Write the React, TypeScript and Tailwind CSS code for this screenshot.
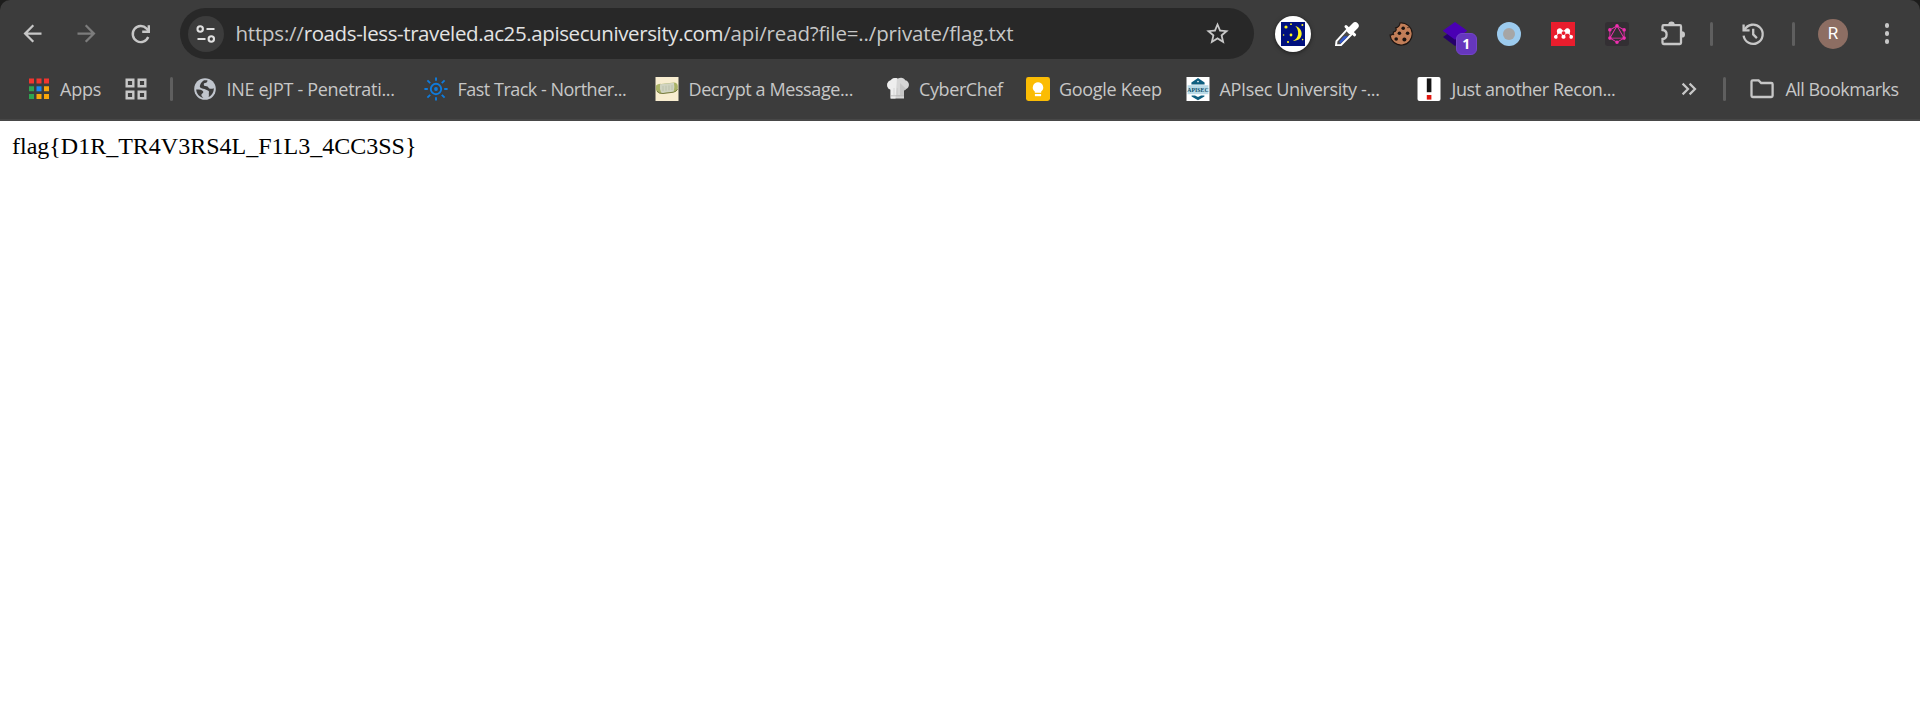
import type { ReactNode } from 'react';
import { SiGraphql, SiMendeley } from 'react-icons/si';

function Slot({ children }: { children: ReactNode }) {
  return <div className="relative flex h-12 w-[54px] shrink-0 items-center justify-center">{children}</div>;
}

function Divider({ className }: { className: string }) {
  return <div className={`h-6 w-[3px] shrink-0 rounded-full bg-[#5f5f5f] ${className}`} />;
}

function BackArrow({ className }: { className: string }) {
  return (
    <svg viewBox="0 0 24 24" className={`size-[27px] ${className}`} fill="currentColor">
      <path d="M20 11H7.83l5.59-5.59L12 4l-8 8 8 8 1.41-1.41L7.83 13H20v-2z" />
    </svg>
  );
}

function ReloadIcon() {
  return (
    <svg viewBox="0 0 28 28" className="size-7" fill="none" stroke="currentColor" strokeWidth="2.4">
      <path d="M21.2 17A8 8 0 1 1 19.6 8.6L21.5 11" />
      <path d="M21.8 5.2V11.8H15.2" />
    </svg>
  );
}

function TuneIcon() {
  return (
    <svg viewBox="0 0 20 20" className="size-5" fill="none" stroke="#e0e0e0" strokeWidth="2.1">
      <circle cx="4.2" cy="5" r="2.7" />
      <path d="M10.5 5H18.5M1.5 15H9.5" />
      <circle cx="15.3" cy="15" r="2.7" />
    </svg>
  );
}

function StarIcon() {
  return (
    <svg viewBox="0 0 24 24" className="size-[27px]" fill="currentColor">
      <path d="M22 9.24l-7.19-.62L12 2 9.19 8.63 2 9.24l5.46 4.73L5.82 21 12 17.27 18.18 21l-1.63-7.03L22 9.24zM12 15.4l-3.76 2.27 1-4.28-3.32-2.88 4.38-.38L12 6.1l1.71 4.04 4.38.38-3.32 2.88 1 4.28L12 15.4z" />
    </svg>
  );
}

function MoonIcon() {
  return (
    <div className="flex size-9 items-center justify-center rounded-full bg-white shadow-[0_1px_4px_rgba(0,0,0,0.5)]">
      <svg viewBox="0 0 24 24" className="size-6">
        <rect width="24" height="24" fill="#00107e" />
        <g fill="#fdf51c">
          <path d="M14.3 4C23 6.2 23.5 19 11.8 18.9C18.3 16.8 18.6 8 14.3 4z" />
          <circle cx="5" cy="5" r="1.6" />
          <circle cx="10" cy="13" r="1.4" />
          <circle cx="2.6" cy="13" r="0.8" />
          <circle cx="7" cy="20" r="1.1" />
          <circle cx="10" cy="2.2" r="0.9" />
          <circle cx="21.4" cy="3" r="1" />
          <circle cx="21.6" cy="17.6" r="0.8" />
        </g>
      </svg>
    </div>
  );
}

function DropperIcon() {
  return (
    <svg viewBox="0 0 24 24" className="size-6" fill="none">
      <path d="M1.5 19.2L12 7.6L16.8 12L6 23L1 23.6z" fill="#4a4a4a" stroke="#fff" strokeWidth="2" strokeLinejoin="round" />
      <path d="M4.2 19.8L9 14.2H13.2L5.6 21.6z" fill="#3155c9" />
      <path d="M11 4.6L19.6 12.8" stroke="#fff" strokeWidth="3" strokeLinecap="round" />
      <path d="M15.5 8.5L20.2 3.8" stroke="#fff" strokeWidth="7" strokeLinecap="round" />
    </svg>
  );
}

function CookieIcon() {
  return (
    <svg viewBox="0 0 24 24" className="size-6">
      <path
        d="M12.6 0.9A11.1 11.1 0 1 1 1 11.5C3 12 4.8 10.8 4.8 9C7.4 9 8.4 7 7.6 5.2C10 5 12 3.4 12.6 0.9z"
        transform="rotate(-8 12 12)"
        fill="#c27e58"
        stroke="#1c1411"
        strokeWidth="1.1"
      />
      <g fill="#1c1411">
        <circle cx="14.2" cy="6.2" r="1.8" />
        <circle cx="18.6" cy="11.2" r="1.8" />
        <circle cx="10.4" cy="11.2" r="1.8" />
        <circle cx="7.2" cy="17" r="1.8" />
        <circle cx="15.4" cy="17.4" r="2" />
        <circle cx="4.6" cy="12.6" r="0.7" />
        <circle cx="19" cy="5.6" r="0.7" />
      </g>
    </svg>
  );
}

function LayersIcon() {
  return (
    <>
      <svg viewBox="0 0 24 24" className="size-6">
        <path d="M12 6.5L24 15L12 24L0 15z" fill="#26006b" />
        <path d="M12 0L24.3 8.8L12 17.8L-0.3 8.8z" fill="#4a00b4" />
      </svg>
      <span className="absolute top-[23.5px] left-[27.5px] flex h-[22px] w-[21.5px] items-center justify-center rounded-[6px] border border-[#7444c8] bg-[#6637bd] font-['Open_Sans',sans-serif] text-[14px] leading-none font-bold text-white">
        1
      </span>
    </>
  );
}

function PuzzleIcon() {
  return (
    <svg viewBox="0 0 28 28" className="size-7" fill="none" stroke="currentColor" strokeWidth="2.3">
      <path d="M5.5 10V6.4Q5.5 5.2 6.7 5.2H22.8Q24 5.2 24 6.4V22.8Q24 24 22.8 24H6.7Q5.5 24 5.5 22.8V19C8.6 18.6 9.6 16.6 9.6 14.4C9.6 12.2 8.6 10.4 5.5 10z" />
      <path d="M11.3 4.6a3.2 3.2 0 0 1 6.4 0zM24.8 11.2a3.2 3.2 0 0 1 0 6.4z" fill="currentColor" stroke="none" />
    </svg>
  );
}

function HistoryIcon() {
  return (
    <svg viewBox="0 0 28 28" className="size-7" fill="none" stroke="currentColor" strokeWidth="2.3">
      <path d="M4.6 15.6A9.6 9.6 0 1 0 5.6 9.8" />
      <path d="M4.6 4.6V10.4H10.6" />
      <path d="M14.2 8.8V14.4L17.9 18.1" />
    </svg>
  );
}

function AppsIcon() {
  return (
    <svg viewBox="0 0 24 24" className="size-6">
      <path d="M2 1.6h5v5H2zM9.5 1.6h5v5h-5zM17 1.6h5v5h-5z" fill="#f2352f" />
      <path d="M2 9.3h5v5H2zM2 17h5v5H2z" fill="#2fa452" />
      <path d="M9.5 9.3h5v5h-5z" fill="#1c86f2" />
      <path d="M17 9.3h5v5h-5zM9.5 17h5v5h-5zM17 17h5v5h-5z" fill="#f9a60a" />
    </svg>
  );
}

function SquaresIcon() {
  return (
    <svg viewBox="0 0 24 24" className="size-6" fill="none" stroke="currentColor" strokeWidth="2.4">
      <path d="M2.7 2.7h6.6v6.6H2.7zM14.7 2.7h6.6v6.6h-6.6zM2.7 14.7h6.6v6.6H2.7zM14.7 14.7h6.6v6.6h-6.6z" />
    </svg>
  );
}

function GlobeIcon() {
  return (
    <svg viewBox="0 0 24 24" className="size-6">
      <circle cx="12" cy="12" r="10.8" fill="#c0c5cd" />
      <g fill="#3c3c3c">
        <path d="M14.4 3.2C14.6 5 13.6 5.8 12 6C10.6 6.2 10.6 7.2 11 8.2C11.4 9.6 14.8 8.6 15.4 10.4C15.8 12 18.6 12 20.8 11.2C21 15.4 18.4 18.8 15.6 20C16.4 17.8 15.4 16.6 16 15C16.2 13.6 13.8 13.6 12.6 12.6C11.6 11.4 8.6 11.8 7.2 10.4C6 9 8.4 4.6 11 3.2z" />
        <path d="M3.2 12.4C6.4 12.4 9.4 12.6 10.2 14.4C10.8 16 8.4 16.4 8.4 18C8.4 19 9.2 20 10.4 20.7C6.4 20 3.4 16.6 3.2 12.4z" />
      </g>
    </svg>
  );
}

function SunIcon() {
  return (
    <svg viewBox="0 0 24 24" className="size-6" fill="none" stroke="#0f7bdc" strokeWidth="1.9">
      <circle cx="12" cy="12" r="5.2" />
      <circle cx="12" cy="12" r="1.9" fill="#0f7bdc" stroke="none" />
      <path d="M12 0.4V3.8M12 20.2V23.6M0.4 12H3.8M20.2 12H23.6M3.4 3.4L6.2 6.2M17.8 17.8L20.6 20.6M3.4 20.6L6.2 17.8M17.8 6.2L20.6 3.4" />
    </svg>
  );
}

function CryptexIcon() {
  return (
    <svg viewBox="0 0 24 24" className="size-6">
      <rect x="0.5" width="23" height="24" fill="#f8edd0" />
      <path d="M1 8.6Q3 6.6 6 6.9L19 5.6Q22.4 6 22.8 9V11.6Q22 14.4 18.5 15.2L6.5 16.6Q2 16 1 13z" fill="#aab266" />
      <path d="M5 7.2L19 5.8Q20 10 18.6 14.8L6.4 16.2Q4.2 11.6 5 7.2z" fill="#d0d3c0" />
      <path d="M2 14.2Q4 16.8 8 16.5L18.5 15.2Q21.6 14.4 22.6 12.2" fill="none" stroke="#777b40" strokeWidth="1" />
      <path d="M8 9V14M11 8.8V13.8M14 8.4V13.4M17 8.2V13" stroke="#b6baa2" strokeWidth="0.7" />
    </svg>
  );
}

function ChefHatIcon() {
  return (
    <svg viewBox="0 0 24 24" className="size-6">
      <path d="M4.6 21.5V12.6C0.4 12 -0.2 4.6 4.6 3.6C6.2 0.6 10 0.4 12 1.6C14.6 0 18.4 0.8 19.2 3.2C23.8 4 24.2 10.6 20.2 12L18 13.6V21.5z" fill="#d6d6d6" />
      <path d="M4.6 21.5V12.6C0.4 12 -0.2 4.6 4.6 3.6C6.2 0.8 9 0.6 11 1.2L9.5 21.5z" fill="#eeeeee" />
      <path d="M14 6L20.2 12L18 13.6V18H14z" fill="#c6c6c6" />
      <path d="M4.6 18.8H18" stroke="#a6a6a6" strokeWidth="0.7" />
      <path d="M8 11V18M11.3 11V18M14.6 11V18" stroke="#c6c6c6" strokeWidth="0.6" />
    </svg>
  );
}

function KeepIcon() {
  return (
    <svg viewBox="0 0 24 24" className="size-6">
      <rect width="24" height="24" rx="2.4" fill="#fbbc04" />
      <path d="M12 5.2a5.2 5.2 0 0 0-3.2 9.3V15.8h6.4V14.5A5.2 5.2 0 0 0 12 5.2z" fill="#fff" />
      <path d="M8.9 17h6.2v2.2H8.9z" fill="#fff" />
    </svg>
  );
}

function ApisecIcon() {
  return (
    <svg viewBox="0 0 24 24" className="size-6">
      <rect x="0.5" width="23" height="24" fill="#fff" />
      <path d="M5.4 5.6L12 1L18.6 5.6V7.4H5.4z" fill="#0e5f80" />
      <circle cx="12" cy="4.6" r="0.8" fill="#fff" />
      <path d="M1.6 8.2H22.4V17.2H1.6z" fill="#b9dbe8" />
      <path d="M5.6 18.4H9L12 20L15 18.4H18.4V19.6L12 23.2L5.6 19.6z" fill="#0e5f80" />
      <text x="12" y="14.9" textAnchor="middle" className="fill-[#0b4d69] font-['Liberation_Serif',serif] text-[5.8px] font-bold">
        APISEC
      </text>
    </svg>
  );
}

function ExclamationIcon() {
  return (
    <svg viewBox="0 0 24 24" className="size-6">
      <rect x="0.5" width="23" height="24" rx="2" fill="#fff" />
      <rect x="9.8" y="1.4" width="4.6" height="13.8" fill="#161616" />
      <rect x="9.8" y="18" width="4.6" height="4.6" fill="#e0160f" />
    </svg>
  );
}

function Bookmark({ icon, label, className, labelClass }: { icon: ReactNode; label?: string; className: string; labelClass?: string }) {
  return (
    <div className={`flex shrink-0 items-center whitespace-nowrap ${className}`}>
      <div className="shrink-0">{icon}</div>
      {label && <span className={labelClass}>{label}</span>}
    </div>
  );
}

export default function App() {
  return (
    <div className="flex h-[718px] w-[1920px] flex-col overflow-hidden bg-white">
      <div className="shrink-0 bg-[#1d1d1c]">
        <header className="h-[121px] rounded-t-[10px] border-b-2 border-[#474747] bg-[#3c3c3c] font-['Open_Sans','Noto_Sans',sans-serif] text-[#c7c7c7]">
          <div className="flex h-[67px] items-center pl-[5.5px]">
            <Slot><BackArrow className="text-[#c7c7c7]" /></Slot>
            <Slot><BackArrow className="rotate-180 text-[#7c7c7c]" /></Slot>
            <Slot><ReloadIcon /></Slot>
            <div className="ml-[12.5px] flex h-[51px] w-[1074px] shrink-0 items-center rounded-full bg-[#282828] pr-[23px] pl-[7.5px]">
              <div className="flex size-9 items-center justify-center rounded-full bg-[#3c3c3c]"><TuneIcon /></div>
              <div className="ml-3 flex text-[20.5px] leading-none whitespace-pre">
                <span className="tracking-[-0.22px]">https://</span>
                <span className="tracking-[-0.39px] text-[#e3e3e3]">roads-less-traveled.ac25.apisecuniversity.com</span>
                <span className="tracking-[-0.14px]">/api/read?file=../private/flag.txt</span>
              </div>
              <div className="ml-auto"><StarIcon /></div>
            </div>
            <div className="ml-3 flex items-center">
              <Slot><MoonIcon /></Slot>
              <Slot><DropperIcon /></Slot>
              <Slot><CookieIcon /></Slot>
              <Slot><LayersIcon /></Slot>
              <Slot><div className="flex size-6 items-center justify-center rounded-full bg-[#9ccbee]"><div className="size-3 rounded-full bg-[#a6a6a6]" /></div></Slot>
              <Slot><div className="flex size-6 items-center justify-center bg-[#e91d2d]"><SiMendeley className="size-[19px] text-white" /></div></Slot>
              <Slot><div className="flex size-6 items-center justify-center rounded-[3px] bg-[#332f33]"><SiGraphql className="size-5 text-[#f02fb0]" /></div></Slot>
              <Slot><PuzzleIcon /></Slot>
            </div>
            <Divider className="ml-3" />
            <div className="ml-[13px]"><Slot><HistoryIcon /></Slot></div>
            <Divider className="ml-[11.5px]" />
            <div className="ml-[23.5px] flex size-[30px] shrink-0 items-center justify-center rounded-full bg-[#8d6e63] font-['Roboto',sans-serif] text-[17px] leading-none text-white">R</div>
            <div className="ml-3">
              <Slot>
                <div className="flex flex-col gap-[3.6px]">
                  <div className="size-[4.6px] rounded-full bg-[#c7c7c7]" />
                  <div className="size-[4.6px] rounded-full bg-[#c7c7c7]" />
                  <div className="size-[4.6px] rounded-full bg-[#c7c7c7]" />
                </div>
              </Slot>
            </div>
          </div>
          <div className="flex h-11 items-center pl-[27px] text-[18px] leading-none">
            <Bookmark className="w-[97px]" icon={<AppsIcon />} label="Apps" labelClass="ml-[9px] tracking-[-0.25px]" />
            <Bookmark className="w-[45.5px]" icon={<SquaresIcon />} />
            <Divider className="mr-[20.5px]" />
            <Bookmark className="w-[231px]" icon={<GlobeIcon />} label="INE eJPT - Penetrati..." labelClass="ml-[9.5px] tracking-[-0.3px]" />
            <Bookmark className="w-[231px]" icon={<SunIcon />} label="Fast Track - Norther..." labelClass="ml-[9.5px] tracking-[-0.5px]" />
            <Bookmark className="w-[231px]" icon={<CryptexIcon />} label="Decrypt a Message..." labelClass="ml-[9.5px] tracking-[-0.4px]" />
            <Bookmark className="w-[140px]" icon={<ChefHatIcon />} label="CyberChef" labelClass="ml-[9px] tracking-[-0.4px]" />
            <Bookmark className="w-[160px]" icon={<KeepIcon />} label="Google Keep" labelClass="ml-[9px] tracking-[-0.3px]" />
            <Bookmark className="w-[231px]" icon={<ApisecIcon />} label="APIsec University -..." labelClass="ml-[9.5px] tracking-[-0.34px]" />
            <Bookmark className="w-[264px]" icon={<ExclamationIcon />} label="Just another Recon..." labelClass="ml-[10.5px] tracking-[-0.43px]" />
            <svg viewBox="0 0 16 14" className="h-[14px] w-4 shrink-0" fill="none" stroke="currentColor" strokeWidth="2.2">
              <path d="M1.6 1.6L7 7L1.6 12.4M8.6 1.6L14 7L8.6 12.4" />
            </svg>
            <Divider className="mr-6 ml-[25.5px]" />
            <Bookmark
              className=""
              icon={
                <svg viewBox="0 0 24 24" className="size-6" fill="none" stroke="currentColor" strokeWidth="2.3">
                  <path d="M1.5 4.6Q1.5 3.4 2.7 3.4H8.6L11.2 6H21.3Q22.6 6 22.6 7.2V18.8Q22.6 20 21.3 20H2.7Q1.5 20 1.5 18.8z" />
                </svg>
              }
              label="All Bookmarks"
              labelClass="ml-3 tracking-[-0.53px]"
            />
          </div>
        </header>
      </div>
      <main className="p-3 font-['Liberation_Serif',serif] text-[24px] leading-[27px] text-black">flag{'{'}D1R_TR4V3RS4L_F1L3_4CC3SS{'}'}</main>
    </div>
  );
}
